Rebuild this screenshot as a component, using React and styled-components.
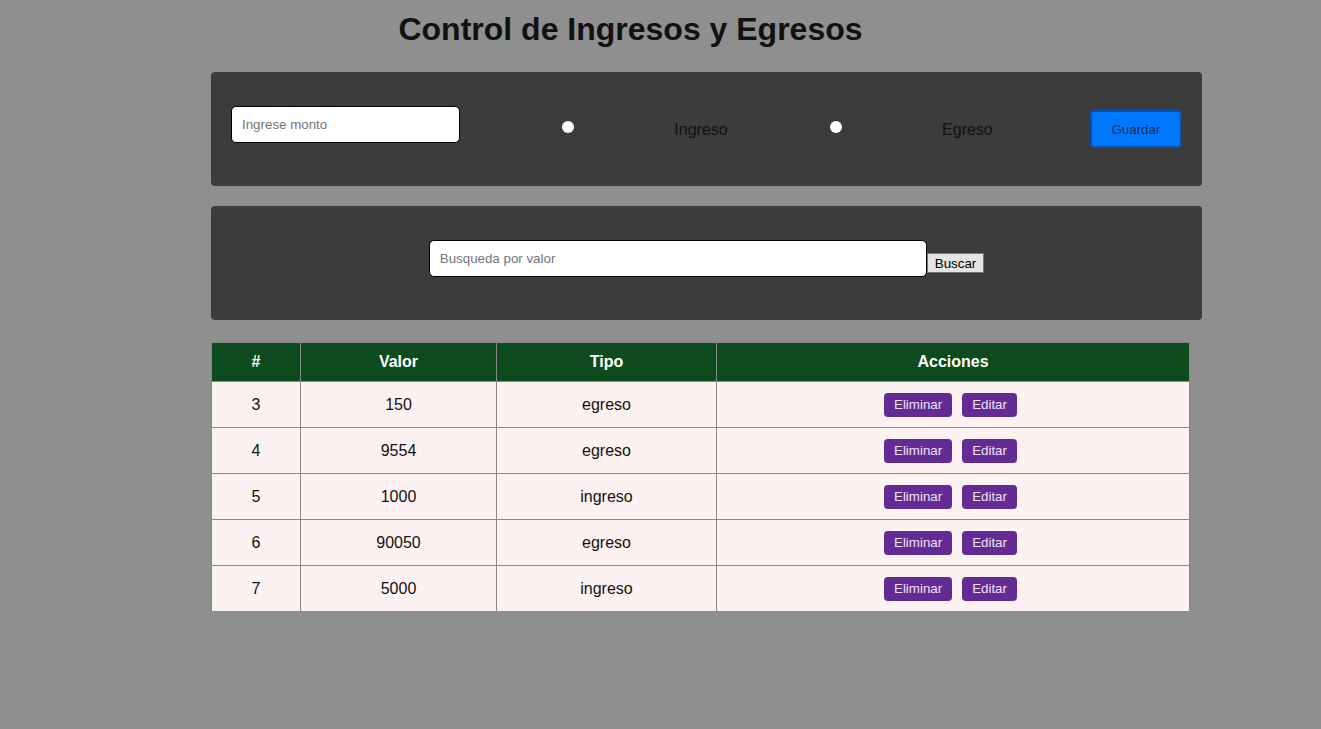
import React from 'react';
import styled, { createGlobalStyle } from 'styled-components';

const GlobalStyle = createGlobalStyle`
  body {
    margin: 0;
    background: #8f8f8f;
    font-family: "Liberation Sans", Arial, sans-serif;
  }
`;

const Page = styled.div`
  padding-bottom: 40px;
`;

const Title = styled.h1`
  margin: 11px 0 24px;
  padding-right: 60px;
  text-align: center;
  font-size: 32px;
  font-weight: bold;
  color: #111;
  line-height: 37px;
`;

const Content = styled.div`
  margin-left: 211px;
  width: 991px;
  display: flex;
  flex-direction: column;
`;

const Panel = styled.div`
  box-sizing: border-box;
  height: 114px;
  margin-bottom: ${p => p.$gap || 0}px;
  padding: 34px 20px 0;
  background: #3c3c3c;
  border-radius: 4px;
  display: flex;
  align-items: flex-start;
  justify-content: ${p => p.$center ? 'center' : 'space-between'};
`;

const TextInput = styled.input`
  box-sizing: border-box;
  width: ${p => p.$w}px;
  height: 37px;
  padding: 0 10px;
  border: 1px solid #000;
  border-radius: 5px;
  background: #fff;
  font-family: "Liberation Sans", Arial, sans-serif;
  font-size: 13.33px;
  outline: none;
  &::placeholder {
    color: #757575;
  }
`;

const Radio = styled.input`
  appearance: none;
  margin: 15px 3px 0 5px;
  width: 12px;
  height: 12px;
  border-radius: 50%;
  background: #fff;
`;

const Label = styled.span`
  margin-top: 15px;
  font-size: 16px;
  line-height: 18px;
  color: #111;
`;

const SaveButton = styled.button`
  box-sizing: border-box;
  margin-top: 4px;
  width: 92px;
  height: 38px;
  background: #0077ff;
  border: 2px solid #0a4fa8;
  border-radius: 4px;
  color: #1c2f4d;
  font-family: "Liberation Sans", Arial, sans-serif;
  font-size: 13.33px;
`;

const SearchButton = styled.button`
  box-sizing: border-box;
  margin-top: 13px;
  height: 20px;
  padding: 0 7px;
  background: #e4e4e4;
  border: 1px solid #767676;
  border-radius: 0;
  color: #000;
  font-family: "Liberation Sans", Arial, sans-serif;
  font-size: 13.33px;
`;

const Table = styled.table`
  margin-top: 22px;
  width: 978px;
  table-layout: fixed;
  border-collapse: collapse;
  font-size: 16px;
`;

const HeadCell = styled.th`
  height: 38px;
  padding: 0;
  background: #0d4b1e;
  color: #fff;
  font-weight: bold;
  border: 1px solid #888;
  text-align: center;
`;

const Cell = styled.td`
  height: 45px;
  padding: 0;
  background: #fcf2f2;
  color: #111;
  border: 1px solid #888;
  text-align: center;
`;

const Actions = styled.div`
  display: flex;
  justify-content: center;
  gap: 5px;
`;

const ActionButton = styled.button`
  height: 24px;
  margin-right: 5px;
  padding: 0 10px;
  background: #652b95;
  border: none;
  border-radius: 4px;
  color: #ece3f3;
  font-family: "Liberation Sans", Arial, sans-serif;
  font-size: 13.33px;
`;

const rows = [
  { id: 3, valor: 150, tipo: 'egreso' },
  { id: 4, valor: 9554, tipo: 'egreso' },
  { id: 5, valor: 1000, tipo: 'ingreso' },
  { id: 6, valor: 90050, tipo: 'egreso' },
  { id: 7, valor: 5000, tipo: 'ingreso' },
];

export default function App() {
  return (
    <Page>
      <GlobalStyle />
      <Title>Control de Ingresos y Egresos</Title>
      <Content>
        <Panel $gap={20}>
          <TextInput $w={229} placeholder="Ingrese monto" />
          <Radio type="radio" name="tipo" />
          <Label>Ingreso</Label>
          <Radio type="radio" name="tipo" />
          <Label>Egreso</Label>
          <SaveButton>Guardar</SaveButton>
        </Panel>
        <Panel $center>
          <TextInput $w={498} placeholder="Busqueda por valor" />
          <SearchButton>Buscar</SearchButton>
        </Panel>
        <Table>
          <colgroup>
            <col style={{ width: 89 }} />
            <col style={{ width: 196 }} />
            <col style={{ width: 220 }} />
            <col style={{ width: 473 }} />
          </colgroup>
          <thead>
            <tr>
              <HeadCell>#</HeadCell>
              <HeadCell>Valor</HeadCell>
              <HeadCell>Tipo</HeadCell>
              <HeadCell>Acciones</HeadCell>
            </tr>
          </thead>
          <tbody>
            {rows.map(r => (
              <tr key={r.id}>
                <Cell>{r.id}</Cell>
                <Cell>{r.valor}</Cell>
                <Cell>{r.tipo}</Cell>
                <Cell>
                  <Actions>
                    <ActionButton>Eliminar</ActionButton>
                    <ActionButton>Editar</ActionButton>
                  </Actions>
                </Cell>
              </tr>
            ))}
          </tbody>
        </Table>
      </Content>
    </Page>
  );
}
